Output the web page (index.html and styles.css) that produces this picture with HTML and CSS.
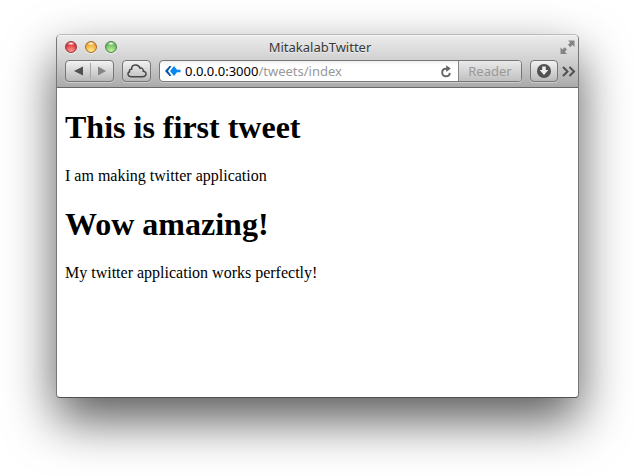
FILE: index.html
```html
<!DOCTYPE html>
<html lang="en">
<head>
<meta charset="utf-8">
<title>MitakalabTwitter</title>
<link rel="stylesheet" href="styles.css">
</head>
<body>
<div class="window">
  <header class="chrome">
    <div class="titlebar">
      <div class="lights"><i class="light red"></i><i class="light yellow"></i><i class="light green"></i></div>
      <div class="title"><span>MitakalabTwitter</span></div>
      <svg class="expand" width="15" height="15" viewBox="0 0 15 15"><path fill="#858585" d="M8 0.5h6.5V7l-2-2-2.2 2.2-2.3-2.4L10.2 2.500ZM0.500 7.500l2 2 2.200-2.200 2.300 2.300-2.200 2.200 2.200 2.200H.5Z"/></svg>
    </div>
    <div class="toolbar">
      <div class="button nav">
        <svg width="47" height="20" viewBox="0 0 47 20"><path d="M8 10l9-4.500v9Z" fill="#505050"/><path d="M24.500 2v16" stroke="#a5a5a5"/><path d="M40 10l-8-4.500v9Z" fill="#858585"/></svg>
      </div>
      <div class="button cloud">
        <svg width="27" height="20" viewBox="0 0 27 20"><path d="M8 15.700h11.500c4.600 0 4.500-5.300.8-5.500.2-2.600-1.800-3.600-3.200-2.900C15.300 2.500 8.300 3.300 8.600 8.200c-2-.2-2.500 1.400-2 2.600-2.600 1-2.100 4.700 1.400 4.900Z" fill="none" stroke="#484848" stroke-width="1.500"/></svg>
      </div>
      <div class="address">
        <svg class="favicon" width="17" height="12" viewBox="0 0 17 12"><path d="M7.500 1H5.500L1 6l4.500 5h2L4 6Z" fill="#0754a4"/><path d="M6 6l4-5 3 3.800h3.500v2.400H13L10 11Z" fill="#0789ef"/></svg>
        <span class="url">0.0.0.0:3000<span class="path">/tweets/index</span></span>
        <svg class="reload" width="12" height="13" viewBox="0 0 12 13"><path d="M8.300 3.700H5.500a3.800 3.800 0 1 0 4.300 4.100" fill="none" stroke="#666" stroke-width="1.900"/><path d="M6.200.3l4.600 3.300-4.600 3.300Z" fill="#666"/></svg>
        <div class="reader">Reader</div>
      </div>
      <div class="button download">
        <svg width="26" height="20" viewBox="0 0 26 20"><circle cx="13" cy="10" r="7" fill="#505050"/><path d="M11.200 5.500h3.600V9h2.500L13 14 8.700 9h2.500Z" fill="#eee"/></svg>
      </div>
      <svg class="more" width="14" height="11" viewBox="0 0 14 11"><path d="M1 1l4.500 4.500L1 10M7.500 1L12 5.500 7.500 10" fill="none" stroke="#505050" stroke-width="2"/></svg>
    </div>
  </header>
  <main class="page">
    <h1>This is first tweet</h1>
    <p>I am making twitter application</p>
    <h1>Wow amazing!</h1>
    <p>My twitter application works perfectly!</p>
  </main>
</div>
</body>
</html>
```
FILE: styles.css
```css
* { box-sizing: border-box; }
body {
  margin: 0;
  height: 476px;
  overflow: hidden;
  background: #fff;
  padding: 34px 57px 0 56px;
}
svg { display: block; flex: none; }
.window {
  height: 364px;
  border: 1px solid #777;
  border-top-color: #bbb;
  border-bottom-color: #505050;
  border-radius: 5px 5px 4px 4px;
  background: #fff;
  box-shadow: 0 22px 50px rgba(0, 0, 0, 0.65);
  overflow: hidden;
}
.chrome {
  height: 53px;
  background: linear-gradient(#ebebeb, #d2d2d2 45%, #aaa);
  border-bottom: 1px solid #686868;
  border-top: 1px solid #f4f4f4;
  font-family: "Noto Sans", "Open Sans", sans-serif;
}
.titlebar {
  display: flex;
  height: 22px;
  align-items: center;
  justify-content: space-between;
  padding: 0 3px 0 8px;
}
.lights { display: flex; gap: 8px; width: 60px; }
.light {
  width: 12px;
  height: 12px;
  border-radius: 50%;
  border: 1px solid;
  box-shadow: 0 1px 0 #eee;
}
.red { border-color: #99363a; background: radial-gradient(ellipse 4px 2px at 50% 15%, #fff, transparent), radial-gradient(circle at 50% 90%, #ff9d92, #df3940 65%, #b92832); }
.yellow { border-color: #a66b2d; background: radial-gradient(ellipse 4px 2px at 50% 15%, #fff, transparent), radial-gradient(circle at 50% 90%, #ffed91, #f1ac38 65%, #cb7e25); }
.green { border-color: #4b8744; background: radial-gradient(ellipse 4px 2px at 50% 15%, #fff, transparent), radial-gradient(circle at 50% 90%, #c8f5a2, #70bd61 65%, #459443); }
.title {
  font-size: 13px;
  line-height: 22px;
  color: #383838;
  text-shadow: 0 1px 0 #eee;
  white-space: nowrap;
}
.expand { margin-left: 45px; }
.toolbar {
  display: flex;
  align-items: center;
  height: 24px;
  padding-left: 8px;
  margin-top: 1px;
}
.button {
  height: 22px;
  border: 1px solid #777;
  border-radius: 4px;
  background: linear-gradient(#f2f2f2, #b9b9b9);
  box-shadow: 0 1px 0 #ccc;
}
.nav { width: 49px; margin-right: 8px; }
.cloud { width: 29px; margin-right: 8px; }
.address {
  display: flex;
  align-items: center;
  width: 363px;
  height: 22px;
  margin-right: 8px;
  padding-left: 4px;
  border: 1px solid #777;
  border-radius: 4px;
  background: linear-gradient(#eee, #fff 4px);
  box-shadow: 0 1px 0 #ccc;
  overflow: hidden;
}
.url {
  margin-left: 4px;
  width: 255px;
  font-size: 13px;
  line-height: 20px;
  color: #000;
  white-space: nowrap;
}
.path { color: #999; }
.reload { margin-right: 6px; }
.reader {
  flex: 1;
  height: 20px;
  border-left: 1px solid #858585;
  background: linear-gradient(#eaeaea, #c0c0c0);
  font-size: 13px;
  line-height: 20px;
  text-align: center;
  color: #999;
}
.download { width: 28px; margin-right: 4px; }
.more { margin-top: 1px; }
.page {
  padding: 0 8px;
  display: flow-root;
  font: 16px "Liberation Serif", serif;
  color: #000;
}
h1 { font-size: 32px; line-height: 37px; margin: 21px 0; }
p { line-height: 18px; margin: 16px 0 21px; }
```
